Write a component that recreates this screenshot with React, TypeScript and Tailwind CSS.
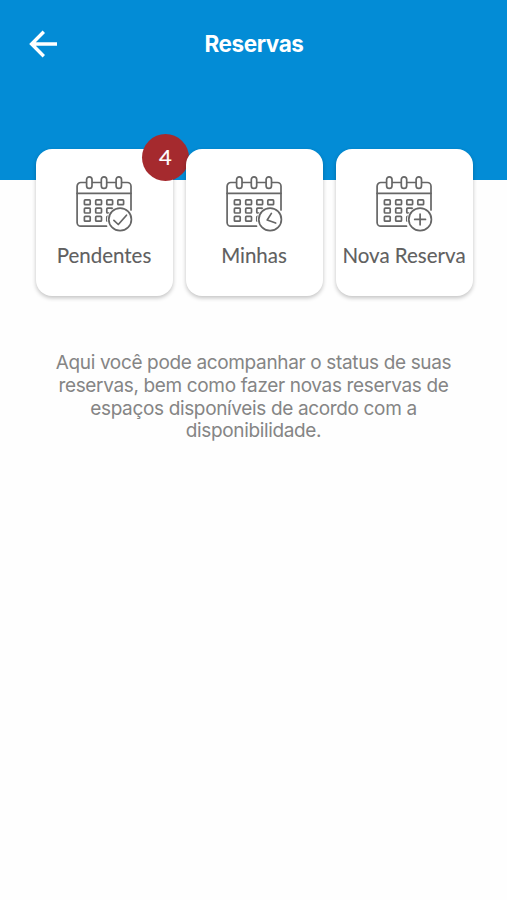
import type { ReactNode } from "react";

const columns = [12.3, 23.6, 34.7, 45.7];
const rows = [27.3, 35.6, 43.8];

function CalendarIcon({ children }: { children: ReactNode }) {
  return (
    <svg width="58" height="57" viewBox="0 0 58 57" fill="none" stroke="#666666" strokeWidth="1.7" strokeLinecap="round" strokeLinejoin="round">
      <path d="M31.5 51.2H5.8a3.7 3.7 0 0 1-3.7-3.7V11.2a3.7 3.7 0 0 1 3.7-3.7h46.5a3.7 3.7 0 0 1 3.7 3.7V35" />
      <path d="M2.1 18.3H56" />
      {[14.3, 29, 43.8].map((x) => (
        <rect key={x} x={x - 2.7} y="1.8" width="5.4" height="11.6" rx="2.7" fill="white" />
      ))}
      {rows.map((y) =>
        columns.map((x) => (
          <rect key={`${x}-${y}`} x={x - 2.9} y={y - 2.4} width="5.8" height="4.8" rx="0.8" />
        )),
      )}
      <circle cx="45.1" cy="44.4" r="13" fill="white" stroke="none" />
      <circle cx="45.1" cy="44.4" r="11.3" />
      {children}
    </svg>
  );
}

function Card({ label, icon, badge }: { label: string; icon: ReactNode; badge?: number }) {
  return (
    <div className="relative flex h-[147px] w-[137px] flex-col items-center rounded-[16px] bg-white pr-[1px] pt-[26px] shadow-[0_2px_4px_rgba(0,0,0,0.24)]">
      <CalendarIcon>{icon}</CalendarIcon>
      <span className="mt-[9px] whitespace-nowrap font-[Lato,sans-serif] text-[20.5px] leading-[28px] text-[#606060] [-webkit-text-stroke:0.1px_#606060]">
        {label}
      </span>
      {badge !== undefined && (
        <span className="absolute -right-[16px] -top-[15px] flex size-[47px] items-center justify-center rounded-full bg-[#a52a2e] pb-[2px] font-[Lato,sans-serif] text-[22px] text-white [-webkit-text-stroke:0.2px_white]">
          {badge}
        </span>
      )}
    </div>
  );
}

export default function App() {
  return (
    <div className="h-[900px] w-[507px] overflow-hidden bg-[#fefefe] font-[Inter,sans-serif]">
      <header className="h-[180px] bg-[#038cd6] pt-[22px]">
        <div className="grid h-[44px] grid-cols-[86px_1fr_85px] items-center">
          <button aria-label="Voltar" className="pl-[29px]">
            <svg width="29" height="28" viewBox="0 0 29 28" fill="none" stroke="white" strokeWidth="3.4">
              <path d="M14.8 1.8 2.6 14l12.2 12.2M2.6 14H28" />
            </svg>
          </button>
          <h1 className="text-center text-[22.5px] font-bold tracking-[-0.4px] text-white">Reservas</h1>
        </div>
      </header>
      <main>
        <section className="-mt-[31px] flex gap-[13px] pl-[36px]">
          <Card label="Pendentes" badge={4} icon={<path d="m38.9 45.3 4.4 4.2 8.2-9.3" />} />
          <Card label="Minhas" icon={<path d="M46.4 38.4 42.2 45l8.5 3" />} />
          <Card label="Nova Reserva" icon={<path d="M39.7 44.4h10.8M45.1 39v10.8" />} />
        </section>
        <p className="mx-auto mt-[56px] w-[430px] text-center text-[19px] leading-[22.8px] tracking-[-0.35px] text-[#858585]">
          Aqui você pode acompanhar o status de suas
          <br />
          reservas, bem como fazer novas reservas de
          <br />
          espaços disponíveis de acordo com a
          <br />
          disponibilidade.
        </p>
      </main>
    </div>
  );
}
